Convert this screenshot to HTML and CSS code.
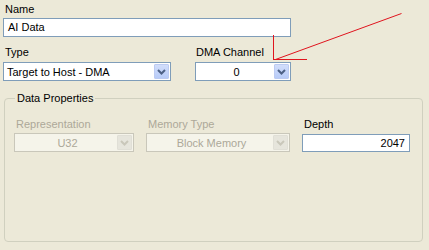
FILE: index.html
```html
<!DOCTYPE html>
<html lang="en">
<head>
  <meta charset="UTF-8">
  <title>AI Data</title>
  <link rel="stylesheet" href="styles.css">
</head>
<body>
<div class="form">
  <div class="field name">
    <label>Name</label>
    <div class="textbox">AI Data</div>
  </div>

  <div class="row top">
    <div class="field type">
      <label>Type</label>
      <div class="combo">
        <span class="value">Target to Host - DMA</span>
        <span class="btn"><svg width="9" height="6" viewBox="0 0 9 6"><path d="M1 1l3.5 3.5L8 1" fill="none" stroke="#4d6185" stroke-width="2"/></svg></span>
      </div>
    </div>
    <div class="field dma">
      <label>DMA Channel</label>
      <div class="combo">
        <span class="value center">0</span>
        <span class="btn"><svg width="9" height="6" viewBox="0 0 9 6"><path d="M1 1l3.5 3.5L8 1" fill="none" stroke="#4d6185" stroke-width="2"/></svg></span>
      </div>
    </div>
  </div>

  <fieldset class="group">
    <legend>Data Properties</legend>
    <div class="row inner">
      <div class="field rep">
        <label class="off">Representation</label>
        <div class="combo disabled">
          <span class="value center">U32</span>
          <span class="btn"><svg width="9" height="6" viewBox="0 0 9 6"><path d="M1 1l3.5 3.5L8 1" fill="none" stroke="#c9c7ba" stroke-width="2"/></svg></span>
        </div>
      </div>
      <div class="field mem">
        <label class="off">Memory Type</label>
        <div class="combo disabled">
          <span class="value center">Block Memory</span>
          <span class="btn"><svg width="9" height="6" viewBox="0 0 9 6"><path d="M1 1l3.5 3.5L8 1" fill="none" stroke="#c9c7ba" stroke-width="2"/></svg></span>
        </div>
      </div>
      <div class="field depth">
        <label>Depth</label>
        <div class="textbox right">2047</div>
      </div>
    </div>
  </fieldset>
</div>

<!-- red annotation arrow drawn over the form -->
<svg class="arrow" width="429" height="250" viewBox="0 0 429 250">
  <path d="M401.5 13.5L275.5 59.5" fill="none" stroke="#e0141e" stroke-width="1"/>
  <path d="M273.5 35v25M273 59.5h34" fill="none" stroke="#e0141e" stroke-width="1" shape-rendering="crispEdges"/>
</svg>
</body>
</html>
```

FILE: styles.css
```css
*{
  margin: 0;
  padding: 0;
  box-sizing: border-box;
}
body{
  width: 429px;
  height: 250px;
  overflow: hidden;
  background: #ece9d8;
  font-family: "Liberation Sans", Arial, sans-serif;
  font-size: 11px;
  color: #000;
  position: relative;
}
.form{
  padding: 3px 0 0 3px;
}
.field{
  display: flex;
  flex-direction: column;
}
label{
  display: block;
  line-height: 13px;
  height: 13px;
  padding-left: 2px;
  margin-bottom: 2px;
}
label.off{
  color: #aca899;
}
.textbox{
  height: 19px;
  line-height: 17px;
  padding: 0 4px;
  background: #fff;
  border: 1px solid #7f9db9;
  white-space: nowrap;
}
.textbox.right{
  text-align: right;
}
.name .textbox{
  width: 288px;
}
.row{
  display: flex;
}
.top{
  margin-top: 9px;
  gap: 24px;
}
.top label{
  margin-bottom: 3px;
}
.type .combo{
  width: 168px;
}
.dma .combo{
  width: 96px;
}
.dma label{
  padding-left: 1px;
}
.combo{
  height: 19px;
  display: flex;
  align-items: center;
  padding: 1px;
  background: #fff;
  border: 1px solid #7f9db9;
}
.combo .value{
  flex: 1;
  padding-left: 2px;
  white-space: nowrap;
  overflow: hidden;
}
.combo .value.center{
  text-align: center;
}
.btn{
  width: 15px;
  height: 15px;
  display: flex;
  align-items: center;
  justify-content: center;
  background: linear-gradient(#d2defb, #b7cbf8);
  border-radius: 1px;
  border: 1px solid #bccbf2;
}
.combo.disabled{
  background: #f5f4ea;
  border-color: #c9c7ba;
  color: #aca899;
}
.combo.disabled .btn{
  background: #e6e5dc;
  border-color: #e0dfd6;
}
.group{
  margin: 11px 0 0 1px;
  width: 419px;
  height: 150px;
  border: 1px solid #d0d0bf;
  border-radius: 4px;
  padding: 0 0 0 9px;
}
.group legend{
  padding: 0 2px;
  line-height: 13px;
  margin-left: 1px;
}
.inner{
  margin-top: 13px;
  gap: 12px;
}
.rep .combo{
  width: 120px;
}
.mem .combo{
  width: 144px;
}
.depth .textbox{
  width: 108px;
  margin-top: 1px;
  height: 18px;
  line-height: 16px;
}
.arrow{
  position: absolute;
  left: 0;
  top: 0;
  pointer-events: none;
}
```
